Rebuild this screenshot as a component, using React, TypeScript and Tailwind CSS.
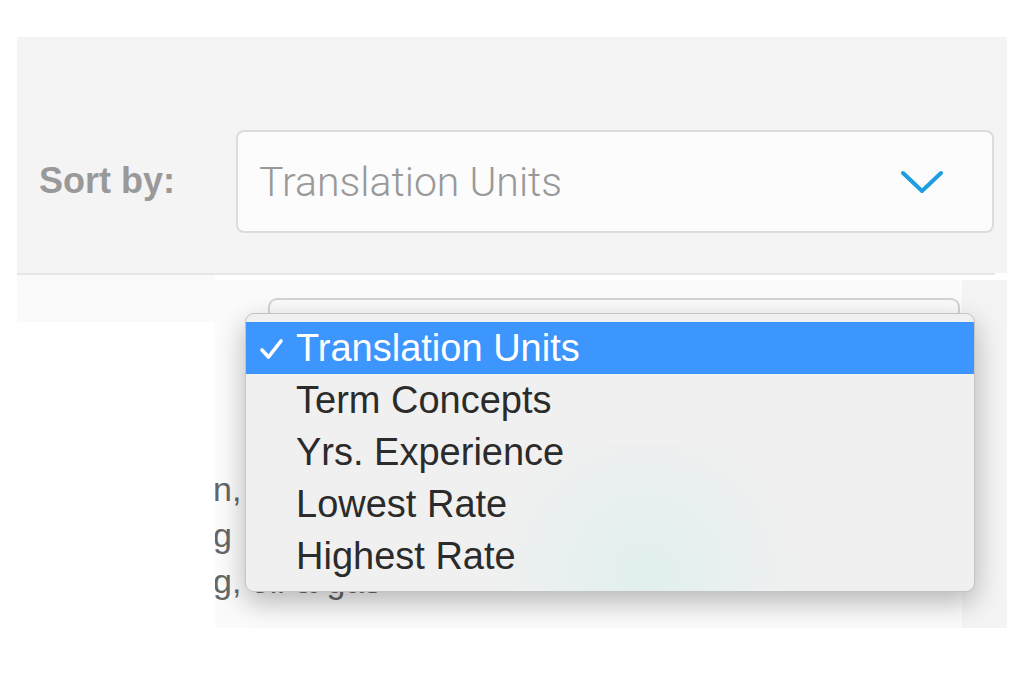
const options = ["Translation Units", "Term Concepts", "Yrs. Experience", "Lowest Rate", "Highest Rate"];

function Chevron() {
  return (
    <svg width="44" height="28" viewBox="0 0 44 28" fill="none">
      <path d="M3 5 L22 23 L41 5" stroke="#1e9de0" strokeWidth="4" strokeLinecap="round" strokeLinejoin="round" />
    </svg>
  );
}

function Check() {
  return (
    <svg width="26" height="24" viewBox="0 0 26 24" fill="none">
      <path d="M3 13 L9.5 20 L22 4" stroke="white" strokeWidth="3.6" strokeLinecap="round" strokeLinejoin="round" />
    </svg>
  );
}

export default function App() {
  return (
    <div className="relative h-[688px] w-[1036px] overflow-hidden bg-white pl-[17px] pt-[37px]">
      {/* sort bar */}
      <div className="flex h-[236px] w-[990px] items-start bg-[#f4f4f4] pt-[93px]">
        <span className="ml-[22px] mt-[24px] w-[197px] font-['Liberation_Sans',Arial,sans-serif] text-[36px] font-bold text-[#999]">
          Sort by:
        </span>
        <div className="flex h-[103px] w-[758px] items-center justify-between rounded-[8px] border-2 border-[#dcdcdc] bg-[#fcfcfc] pl-[21px] pr-[48px]">
          <span className="mt-[2px] font-['Roboto',sans-serif] text-[41px] font-light text-[#999]">Translation Units</span>
          <Chevron />
        </div>
      </div>
      <div className="h-[2px] w-[978px] bg-[#e6e6e6]" />

      {/* lower part: captured native menu */}
      <div className="flex">
        <div className="h-[47px] w-[198px] bg-[#fafafa]" />
        <div className="relative mt-[5px] h-[348px] w-[792px] overflow-hidden bg-[#f4f4f4]">
          <div className="h-full w-[747px] overflow-hidden bg-[#fbfbfb] pt-[18px]">
            <div className="ml-[53px] h-[40px] w-[692px] rounded-t-[9px] border-2 border-b-0 border-[#d4d4d4] bg-[#fbfbfb]" />
            <div className="mt-[128px] -ml-[2px] font-['Liberation_Sans',Arial,sans-serif] text-[34px] leading-[46px] text-[#666]">
              <div>n, oil &amp; gas</div>
              <div>g</div>
              <div>g, oil &amp; gas</div>
            </div>
          </div>
          <div className="absolute left-[30px] top-[33px] h-[279px] w-[730px] overflow-hidden rounded-[9px] border border-[#c4c4c4] bg-[#f0f0f0] py-[8px] shadow-[0_10px_28px_rgba(0,0,0,0.28)]">
            <div className="pointer-events-none absolute left-[200px] top-[130px] h-[260px] w-[400px] rounded-full bg-[radial-gradient(circle,rgba(215,238,238,0.6),rgba(240,240,240,0)_65%)]" />
            {options.map((o, i) => (
              <div
                key={o}
                className={
                  i === 0
                    ? "relative flex h-[52px] items-center bg-[#3d95fe] font-['Liberation_Sans',Arial,sans-serif] text-[38px] text-white"
                    : "relative flex h-[52px] items-center font-['Liberation_Sans',Arial,sans-serif] text-[38px] text-[#2b2b2b]"
                }
              >
                <span className="flex w-[50px] pl-[13px] pt-[2px]">{i === 0 ? <Check /> : null}</span>
                <span>{o}</span>
              </div>
            ))}
          </div>
        </div>
      </div>
    </div>
  );
}
